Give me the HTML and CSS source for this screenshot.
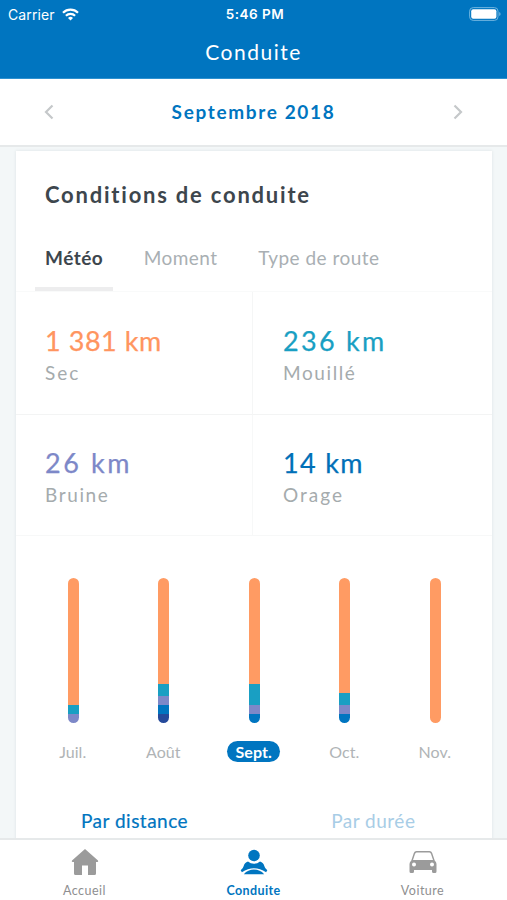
FILE: index.html
```
<!DOCTYPE html>
<html lang="fr">
<head>
<meta charset="utf-8">
<title>Conduite</title>
<link rel="stylesheet" href="styles.css">
</head>
<body>
<header class="top">
  <div class="status">
    <div class="carrier"><span>Carrier</span>
      <svg width="17" height="13" viewBox="0 0 17 13" fill="none" stroke="#fff" stroke-width="2.2"><path d="M1 4.7a10.6 10.6 0 0 1 15 0M3.9 7.7a6.5 6.5 0 0 1 9.2 0"/><path d="M8.5 12.6 6 10a3.6 3.6 0 0 1 5 0z" fill="#fff" stroke="none"/></svg>
    </div>
    <span class="clock">5:46 PM</span>
    <svg class="battery" width="32" height="14" viewBox="0 0 32 14"><rect x=".6" y=".6" width="28.4" height="12.8" rx="3.6" fill="none" stroke="#6fb4df" stroke-width="1"/><rect x="2.2" y="2.2" width="25.2" height="9.6" rx="2" fill="#fff"/><path d="M30.2 5v4q1.4-.6 1.4-2t-1.4-2z" fill="#6fb4df"/></svg>
  </div>
  <h1 class="title"><span>Conduite</span></h1>
</header>
<nav class="period">
  <svg width="10" height="16" viewBox="0 0 10 16"><path d="M8.500 1.500 2 8l6.500 6.500"/></svg>
  <span class="month">Septembre 2018</span>
  <svg width="10" height="16" viewBox="0 0 10 16"><path d="M1.500 1.500 8 8l-6.500 6.500"/></svg>
</nav>
<main class="content">
  <section class="card">
    <h2 class="heading"><span>Conditions de conduite</span></h2>
    <div class="tabs">
      <span class="tab active">Météo</span><span class="tab">Moment</span><span class="tab">Type de route</span>
    </div>
    <div class="stats">
      <div class="stat"><b class="dry">1 381 km</b><span class="short">Sec</span></div>
      <div class="stat"><b class="wet">236 km</b><span>Mouillé</span></div>
      <div class="stat"><b class="drizzle">26 km</b><span>Bruine</span></div>
      <div class="stat"><b class="storm">14 km</b><span class="short">Orage</span></div>
    </div>
    <div class="chart">
      <div class="col"><div class="bar"><i class="c1"></i><i class="c2" style="height:9px"></i><i class="c3" style="height:9px"></i></div><span>Juil.</span></div>
      <div class="col"><div class="bar"><i class="c1"></i><i class="c2" style="height:12px"></i><i class="c3" style="height:9px"></i><i class="c4" style="height:9px"></i><i class="c5" style="height:9px"></i></div><span>Août</span></div>
      <div class="col"><div class="bar"><i class="c1"></i><i class="c2" style="height:21px"></i><i class="c3" style="height:9px"></i><i class="c4" style="height:9px"></i></div><span class="current">Sept.</span></div>
      <div class="col"><div class="bar"><i class="c1"></i><i class="c2" style="height:12px"></i><i class="c3" style="height:9px"></i><i class="c4" style="height:9px"></i></div><span>Oct.</span></div>
      <div class="col"><div class="bar"><i class="c1"></i></div><span>Nov.</span></div>
    </div>
    <div class="modes"><span class="mode">Par distance</span><span class="mode off">Par durée</span></div>
  </section>
</main>
<footer class="tabbar">
  <div class="item">
    <svg width="28" height="28" viewBox="0 0 28 28"><path fill="#9b9b9b" d="M14 1 27 12.500q.8 1.500-.8 1.500H25v11.500q0 1.500-1.500 1.500H17v-9.500h-6V27H4.500Q3 27 3 25.500V14H1.800Q.2 14 1 12.500z"/></svg>
    <span>Accueil</span>
  </div>
  <div class="item selected">
    <svg width="28" height="28" viewBox="0 0 28 28"><g fill="#0075c0"><circle cx="14" cy="7.500" r="5.800"/><path d="M8 13.500q2.500 2.200 6 2.200t6-2.200q3.600 1.200 4.300 4.500.6 2.500 3 4.300l-1.200 2Q20 20.300 14 20.300T1.900 24.300l-1.200-2Q3.100 20.500 3.700 18 4.400 14.700 8 13.500z"/><path d="M3.800 26.200q4.200-4.600 10.200-4.600t10.200 4.600z"/></g></svg>
    <span>Conduite</span>
  </div>
  <div class="item">
    <svg width="28" height="28" viewBox="0 0 28 28"><path fill="#9b9b9b" fill-rule="evenodd" d="M7.500 3h13q2 0 2.700 2l2.500 7.500q1.800 1.500 1.800 3.500v7.500q0 1.500-1.500 1.500h-1.500Q23 25 23 23.500V22H5v1.500Q5 25 3.500 25H2Q.5 25 .5 23.500V16q0-2 1.800-3.500L4.800 5q.7-2 2.700-2zM7.500 4.500Q6.500 4.500 6 6l-2 6h20l-2-6q-.5-1.500-1.500-1.500zM5 14.500a2 2 0 1 0 0 4 2 2 0 0 0 0-4zM23 14.500a2 2 0 1 0 0 4 2 2 0 0 0 0-4z"/></svg>
    <span>Voiture</span>
  </div>
</footer>
</body>
</html>
```
FILE: styles.css
```
* { box-sizing: border-box; }
body { margin: 0; height: 900px; overflow: hidden; display: flex; flex-direction: column; background: #f3f7f8; font-family: Lato, sans-serif; color: #3d464d; }
h1, h2 { margin: 0; font-weight: 400; }
.top { height: 79px; flex: none; background: #0075c0; color: #fff; border-bottom: 1px solid #2d91d0; }
.status { height: 27px; display: grid; grid-template-columns: 1fr auto 1fr; align-items: center; padding: 0 6px 0 8px; font: 14px/27px Inter, sans-serif; }
.carrier { display: flex; align-items: center; gap: 7px; letter-spacing: .1px; }
.clock { font-weight: 600; font-size: 13.500px; letter-spacing: .5px; line-height: 28px; padding-left: 1px; }
.battery { justify-self: end; }
.title { font-size: 21px; line-height: 50px; text-align: center; letter-spacing: 1.500px; }
.period { flex: none; height: 68px; display: flex; justify-content: space-between; align-items: center; padding: 0 44px; background: #fff; border-bottom: 2px solid #e6e9ea; color: #0075c0; }
.period svg { fill: none; stroke: #c5c8ca; stroke-width: 2.200; }
.month { font-size: 19px; font-weight: 700; letter-spacing: 1.650px; padding-bottom: 2px; }
.content { flex: 1; min-height: 0; padding: 4px 15px 0 16px; overflow: hidden; }
.card { background: #fff; box-shadow: 0 0 3px #dde2e4; height: 720px; }
.heading { height: 88px; padding-left: 29px; line-height: 87px; font-size: 22px; font-weight: 700; letter-spacing: 1.780px; }
.tabs { display: flex; height: 52px; padding-left: 19px; font-size: 19px; line-height: 38px; color: #a9afb3; gap: 20.500px; letter-spacing: .480px; }
.tab { padding: 0 10px; white-space: nowrap; }
.active { color: #3d464d; font-weight: 700; border-bottom: 4px solid #ededee; }
.stats { display: grid; grid-template-columns: 237px 1fr; grid-template-rows: 123px 121px; border-top: 1px solid #f9fafa; }
.stat { padding: 30px 0 0 29px; border-bottom: 1px solid #f3f4f4; display: flex; flex-direction: column; }
.stat:nth-child(odd) { border-right: 1px solid #f5f6f6; }
.stat:nth-child(even) { padding-left: 30px; }
.stat:nth-child(n+3) { padding-top: 29px; border-color: #f7f8f8; }
.stat b { font-size: 27px; font-weight: 400; line-height: 38px; -webkit-text-stroke: .25px; }
.stat span { font-size: 19px; line-height: 26px; letter-spacing: 1.600px; color: #a5abad; }
.stat .short { letter-spacing: 2px; }
.dry { color: #ff955f; letter-spacing: .550px; }
.wet { color: #199fc3; letter-spacing: 2.300px; }
.drizzle { color: #7d88c8; letter-spacing: 2.600px; }
.storm { color: #0070b8; letter-spacing: 1.300px; }
.chart { display: grid; grid-template-columns: repeat(5, 90.500px); padding: 42px 0 0 12px; }
.col { display: flex; flex-direction: column; align-items: center; gap: 18px; font-size: 16px; color: #b0b4b6; }
.bar { width: 11px; height: 145px; border-radius: 6px; overflow: hidden; display: flex; flex-direction: column; }
.col span { height: 21px; line-height: 21px; padding: 0 8px; border-radius: 11px; margin-right: 1px; }
.col .current { background: #0075c0; color: #fff; font-weight: 700; letter-spacing: .1px; }
.c1 { flex: 1; background: #ff9b63; }
.c2 { background: #199fc3; }
.c3 { background: #7d88c8; }
.c4 { background: #0075c0; }
.c5 { background: #254a9b; }
.modes { display: flex; padding: 46px 0 0 65px; gap: 143px; font-size: 19px; line-height: 26px; color: #0075c0; white-space: nowrap; letter-spacing: .500px; }
.mode:first-child { -webkit-text-stroke: .2px; }
.off { color: #a8cde6; }
.tabbar { flex: none; height: 62px; border-top: 2px solid #e6e9ea; background: #fff; display: grid; grid-template-columns: 85px 85px 85px; justify-content: space-around; }
.item { display: flex; flex-direction: column; align-items: center; padding-top: 8px; font-size: 12.500px; line-height: 16px; color: #8e8e90; letter-spacing: .5px; }
.item svg { margin-bottom: 7px; }
.selected { color: #0075c0; font-weight: 700; letter-spacing: .4px; }
```
